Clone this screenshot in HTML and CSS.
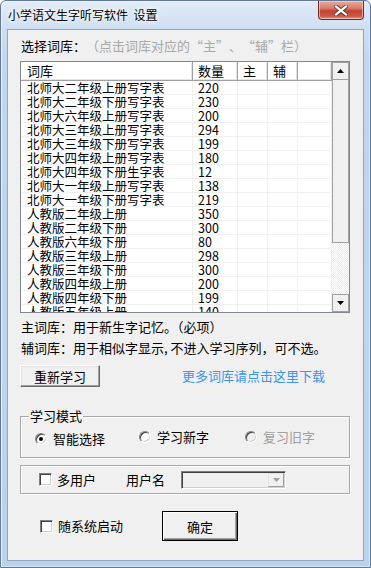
FILE: index.html
```html
<!DOCTYPE html>
<html lang="zh-CN">
<head>
<meta charset="utf-8">
<title>设置</title>
<link rel="stylesheet" href="styles.css">
</head>
<body>
<div class="window">
  <div class="titlebar">
    <span class="title">小学语文生字听写软件&nbsp;&nbsp;设置</span>
    <div class="close">
      <svg width="14" height="11" viewBox="0 0 14 11">
        <path d="M2 1.5 L12 9.5 M12 1.5 L2 9.5" stroke="#3a3a3a" stroke-width="4.2" stroke-linecap="square" fill="none" opacity="0.75"/>
        <path d="M2 1.5 L12 9.5 M12 1.5 L2 9.5" stroke="#ffffff" stroke-width="2.2" stroke-linecap="square" fill="none"/>
      </svg>
    </div>
  </div>
  <div class="client">
    <div class="hint-row"><span>选择词库：</span><span class="hint">（点击词库对应的“主”、“辅”栏）</span></div>

    <div class="list">
      <div class="list-view">
        <div class="row head"><span>词库</span><span>数量</span><span>主</span><span>辅</span><span></span></div>
        <div class="row"><span>北师大二年级上册写字表</span><span>220</span><span></span><span></span><span></span></div>
        <div class="row"><span>北师大二年级下册写字表</span><span>230</span><span></span><span></span><span></span></div>
        <div class="row"><span>北师大六年级上册写字表</span><span>200</span><span></span><span></span><span></span></div>
        <div class="row"><span>北师大三年级上册写字表</span><span>294</span><span></span><span></span><span></span></div>
        <div class="row"><span>北师大三年级下册写字表</span><span>199</span><span></span><span></span><span></span></div>
        <div class="row"><span>北师大四年级上册写字表</span><span>180</span><span></span><span></span><span></span></div>
        <div class="row"><span>北师大四年级下册生字表</span><span>12</span><span></span><span></span><span></span></div>
        <div class="row"><span>北师大一年级上册写字表</span><span>138</span><span></span><span></span><span></span></div>
        <div class="row"><span>北师大一年级下册写字表</span><span>219</span><span></span><span></span><span></span></div>
        <div class="row"><span>人教版二年级上册</span><span>350</span><span></span><span></span><span></span></div>
        <div class="row"><span>人教版二年级下册</span><span>300</span><span></span><span></span><span></span></div>
        <div class="row"><span>人教版六年级下册</span><span>80</span><span></span><span></span><span></span></div>
        <div class="row"><span>人教版三年级上册</span><span>298</span><span></span><span></span><span></span></div>
        <div class="row"><span>人教版三年级下册</span><span>300</span><span></span><span></span><span></span></div>
        <div class="row"><span>人教版四年级上册</span><span>200</span><span></span><span></span><span></span></div>
        <div class="row"><span>人教版四年级下册</span><span>199</span><span></span><span></span><span></span></div>
        <div class="row"><span>人教版五年级上册</span><span>140</span><span></span><span></span><span></span></div>
      </div>
      <div class="scrollbar">
        <div class="sb-btn"><svg width="7" height="4" viewBox="0 0 7 4"><path d="M3.5 0 L7 4 L0 4 Z" fill="#000"/></svg></div>
        <div class="sb-thumb"></div>
        <div class="sb-track"></div>
        <div class="sb-btn"><svg width="7" height="4" viewBox="0 0 7 4"><path d="M0 0 L7 0 L3.5 4 Z" fill="#000"/></svg></div>
      </div>
    </div>

    <p class="note first">主词库：用于新生字记忆。（必项）</p>
    <p class="note">辅词库：用于相似字显示, 不进入学习序列，可不选。</p>

    <div class="action-row">
      <div class="btn relearn">重新学习</div>
      <span class="link">更多词库请点击这里下载</span>
    </div>

    <fieldset class="group mode">
      <legend>学习模式</legend>
      <label class="opt o1"><span class="radio checked"></span>智能选择</label>
      <label class="opt o2"><span class="radio"></span>学习新字</label>
      <label class="opt o3 disabled"><span class="radio"></span>复习旧字</label>
    </fieldset>

    <div class="group users">
      <label class="opt u1"><span class="check"></span>多用户</label>
      <span class="uname">用户名</span>
      <div class="combo"><div class="combo-btn"><svg width="7" height="4" viewBox="0 0 7 4"><path d="M0 0 L7 0 L3.5 4 Z" fill="#a0a0a0"/></svg></div></div>
    </div>

    <div class="bottom-row">
      <label class="opt b1"><span class="check"></span>随系统启动</label>
      <div class="btn ok">确定</div>
    </div>
  </div>
</div>
</body>
</html>
```

FILE: styles.css
```css
* { box-sizing: border-box; }

html, body {
  margin: 0;
  padding: 0;
  width: 371px;
  height: 568px;
  overflow: hidden;
  background: #ffffff;
  font-family: "Noto Sans CJK SC", "Noto Sans", sans-serif;
  font-size: 13px;
  color: #000;
}

.window {
  width: 371px;
  height: 568px;
  border: 1px solid #5f7898;
  border-radius: 6px 6px 0 0;
  background: linear-gradient(to bottom, #e3ecf8 0, #cfdff2 28px, #c2d6ee 60px, #bcd2ec 100%);
  box-shadow: inset 1px 1px 0 #eef4fb, inset -1px -1px 0 #d9e6f5;
  display: flex;
  flex-direction: column;
}

.titlebar {
  height: 28px;
  display: flex;
  justify-content: space-between;
  align-items: flex-start;
  padding-left: 7px;
  flex: none;
}

.title {
  font-size: 12px;
  line-height: 14px;
  margin-top: 7px;
  color: #000;
  text-shadow: 0 0 6px #ffffff, 0 0 3px #ffffff;
}

.close {
  width: 46px;
  height: 19px;
  margin-right: 6px;
  border: 1px solid #6b2b26;
  border-top: none;
  border-radius: 0 0 4px 4px;
  background: linear-gradient(to bottom, #e9a99c 0, #d97d6c 40%, #c5412f 55%, #cb5a48 85%, #e09a8c 100%);
  box-shadow: inset 0 0 0 1px rgba(255,220,210,0.6);
  display: flex;
  align-items: center;
  justify-content: center;
}

.client {
  flex: 1;
  margin: 0 6px 6px;
  border: 1px solid #8fa5c0;
  background: #f0f0f0;
  padding: 8px 13px 0 12px;
  display: flex;
  flex-direction: column;
}

.hint-row {
  height: 16px;
  line-height: 16px;
  font-size: 13px;
  padding-left: 1px;
  white-space: nowrap;
  text-spacing-trim: space-all;
}

.hint { color: #a8a8a8; }

/* list view */
.list {
  margin-top: 7px;
  width: 330px;
  height: 252px;
  border: 1px solid #828790;
  background: #fff;
  display: flex;
  flex: none;
}

.list-view {
  flex: 1;
  overflow: hidden;
}

.row {
  display: grid;
  grid-template-columns: 172px 45px 30px 30px 34px;
  height: 14px;
  font-size: 12.5px;
  line-height: 13px;
  white-space: nowrap;
}

.row span {
  border-right: 1px solid #f0f0f0;
  border-bottom: 1px solid #f0f0f0;
  padding-left: 5px;
}

.row span:first-child { padding-left: 6px; }

.row.head {
  height: 19px;
  line-height: 17px;
  font-size: 13px;
}

.row.head span {
  background: #fff;
  border-right: 1px solid #a0a0a0;
  border-bottom: 1px solid #a0a0a0;
  box-shadow: inset 1px 1px 0 #ffffff, inset -1px -1px 0 #e3e3e3;
}

.scrollbar {
  width: 17px;
  display: flex;
  flex-direction: column;
  flex: none;
}

.sb-btn {
  height: 18px;
  border: 1px solid #a0a0a0;
  background: #f0f0f0;
  display: flex;
  align-items: center;
  justify-content: center;
  flex: none;
}

.sb-thumb {
  height: 163px;
  border: 1px solid #a0a0a0;
  border-top: none;
  background: #f0f0f0;
  flex: none;
}

.sb-track {
  flex: 1;
  background: repeating-conic-gradient(#ffffff 0 25%, #ececec 0 50%) 0 0 / 2px 2px;
}

/* notes */
.note {
  margin: 5px 0 0;
  height: 16px;
  line-height: 16px;
  font-size: 13px;
  padding-left: 1px;
  white-space: nowrap;
}

.note.first { margin-top: 6px; }

.action-row {
  margin-top: 9px;
  display: flex;
  align-items: center;
  height: 22px;
}

.btn {
  display: flex;
  align-items: center;
  justify-content: center;
  background: #f0f0f0;
  font-size: 13px;
  border: 1px solid;
  border-color: #ffffff #696969 #696969 #ffffff;
  box-shadow: inset -1px -1px 0 #a0a0a0, inset 1px 1px 0 #e3e3e3;
}

.relearn {
  width: 80px;
  height: 22px;
}

.link {
  margin-left: 82px;
  color: #3c94f0;
  font-size: 13px;
  line-height: 16px;
}

/* groups */
.group {
  width: 330px;
  border: 1px solid #a8a8a8;
  box-shadow: inset 1px 1px 0 #ffffff, 1px 1px 0 #ffffff;
  margin: 0;
}

.mode {
  margin-top: 22px;
  height: 49px;
  padding: 6px 0 0 14px;
  display: flex;
  align-items: flex-start;
}

.mode legend {
  font-size: 13px;
  line-height: 14px;
  padding: 0 1px;
  margin-left: -6px;
}

.opt {
  display: flex;
  align-items: center;
  font-size: 13px;
  line-height: 16px;
  white-space: nowrap;
}

.o1 { margin-top: 2px; }
.o2 { margin-left: 34px; }
.o3 { margin-left: 36px; }

.disabled { color: #a0a0a0; }

.radio {
  width: 12px;
  height: 12px;
  border-radius: 50%;
  border: 1px solid;
  border-color: #808080 #ffffff #ffffff #808080;
  box-shadow: inset 1px 1px 0 #404040, inset -1px -1px 0 #d4d0c8;
  background: #ffffff;
  margin-right: 6px;
  position: relative;
  flex: none;
}

.radio.checked::after {
  content: "";
  position: absolute;
  left: 3px;
  top: 3px;
  width: 4px;
  height: 4px;
  border-radius: 50%;
  background: #000;
}

.disabled .radio { background: #f0f0f0; }

.users {
  margin-top: 7px;
  height: 29px;
  display: flex;
  align-items: center;
  padding-left: 18px;
}

.check {
  width: 13px;
  height: 13px;
  border: 1px solid;
  border-color: #808080 #ffffff #ffffff #808080;
  box-shadow: inset 1px 1px 0 #404040, inset -1px -1px 0 #d4d0c8;
  background: #ffffff;
  margin-right: 5px;
  flex: none;
}

.uname {
  margin-left: 30px;
  font-size: 13px;
  line-height: 16px;
}

.combo {
  margin-left: 16px;
  width: 105px;
  height: 18px;
  border: 1px solid;
  border-color: #808080 #ffffff #ffffff #808080;
  box-shadow: inset 1px 1px 0 #404040, inset -1px -1px 0 #d4d0c8;
  background: #f0f0f0;
  display: flex;
  justify-content: flex-end;
  padding: 1px;
}

.combo-btn {
  width: 16px;
  height: 14px;
  border: 1px solid;
  border-color: #e3e3e3 #a0a0a0 #a0a0a0 #e3e3e3;
  background: #f0f0f0;
  display: flex;
  align-items: center;
  justify-content: center;
}

.bottom-row {
  margin-top: 17px;
  display: flex;
  align-items: center;
  height: 30px;
  padding-left: 20px;
}

.ok {
  margin-left: 39px;
  width: 76px;
  height: 30px;
  border: 1px solid #000;
  box-shadow: inset 1px 1px 0 #ffffff, inset -1px -1px 0 #696969, inset -2px -2px 0 #a0a0a0;
}
```
